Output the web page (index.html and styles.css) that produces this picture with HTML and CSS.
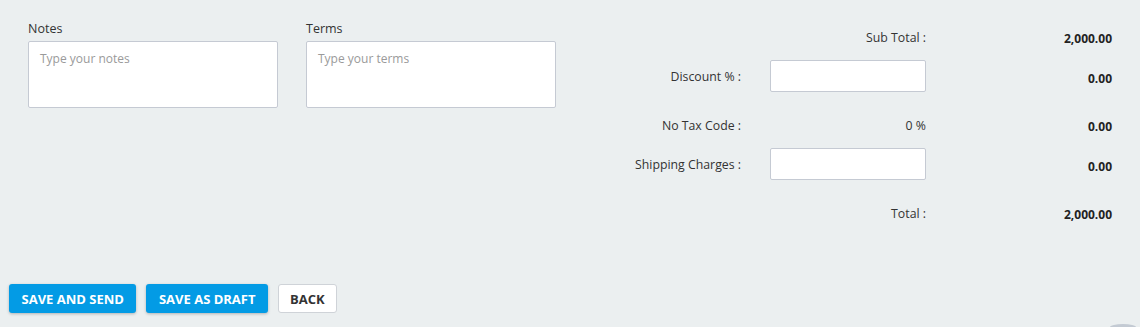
FILE: index.html
```html
<!DOCTYPE html>
<html lang="en">

<head>
  <meta charset="UTF-8">
  <meta name="viewport" content="width=device-width, initial-scale=1.0">
  <title>Invoice footer</title>
  <link rel="stylesheet" href="styles.css">
</head>

<body>
  <div class="page">
    <div class="summary">
      <div class="remarks">
        <div class="field">
          <label for="notes">Notes</label>
          <textarea id="notes" placeholder="Type your notes"></textarea>
        </div>
        <div class="field">
          <label for="terms">Terms</label>
          <textarea id="terms" placeholder="Type your terms"></textarea>
        </div>
      </div>
      <div class="totals">
        <div class="row row-text">
          <span class="label wide">Sub Total :</span>
          <span class="amount">2,000.00</span>
        </div>
        <div class="row row-input">
          <span class="label">Discount % :</span>
          <input class="box" type="text">
          <span class="amount">0.00</span>
        </div>
        <div class="row row-text">
          <span class="label">No Tax Code :</span>
          <span class="rate">0 %</span>
          <span class="amount">0.00</span>
        </div>
        <div class="row row-input">
          <span class="label">Shipping Charges :</span>
          <input class="box" type="text">
          <span class="amount">0.00</span>
        </div>
        <div class="row row-text">
          <span class="label wide">Total :</span>
          <span class="amount">2,000.00</span>
        </div>
      </div>
    </div>
    <div class="actions">
      <button class="btn primary">SAVE AND SEND</button>
      <button class="btn primary">SAVE AS DRAFT</button>
      <button class="btn plain">BACK</button>
    </div>
  </div>
  <i class="fab"></i>
</body>

</html>
```

FILE: styles.css
```css
html,
body {
  margin: 0;
  height: 100%;
  overflow: hidden;
}

body {
  background: #ebeff0;
  font-family: "Open Sans", "Liberation Sans", sans-serif;
  color: #333;
  position: relative;
}

.page {
  padding: 20px 0 0 9px;
}

.summary {
  display: flex;
}

.remarks {
  display: flex;
  flex: none;
  gap: 28px;
  box-sizing: border-box;
  padding-left: 19px;
  width: 580px;
}

.field {
  display: flex;
  flex-direction: column;
}

.field label {
  font-size: 12.5px;
  line-height: 17px;
  margin-bottom: 4px;
  color: #333;
}

.field textarea {
  width: 250px;
  height: 67px;
  box-sizing: border-box;
  border: 1px solid #c5cad3;
  border-radius: 2px;
  background: #fff;
  resize: none;
  outline: none;
  padding: 8px 11px;
  font-family: inherit;
  font-size: 12px;
}

.field textarea::placeholder {
  color: #9a9a9a;
}

.totals {
  display: flex;
  flex-direction: column;
  margin-top: 1px;
}

.row {
  display: grid;
  grid-template-columns: 152px 156px 157px;
  column-gap: 29px;
  align-items: center;
  height: 32px;
  font-size: 12.3px;
}

.row-input {
  margin-bottom: 17px;
}

.row-text {
  margin-bottom: 7px;
}

.row:last-child {
  margin-bottom: 0;
}

.label {
  text-align: right;
  color: #333;
}

.label.wide {
  grid-column: 1 / 3;
}

.rate {
  text-align: right;
  color: #333;
}

.box {
  width: 156px;
  height: 32px;
  box-sizing: border-box;
  border: 1px solid #c5cad3;
  border-radius: 2px;
  background: #fff;
  outline: none;
}

.amount {
  text-align: right;
  font-weight: bold;
  font-size: 12px;
  color: #222;
  padding-top: 5px;
}

.row-text .amount {
  padding-top: 2px;
}

.actions {
  display: flex;
  gap: 10px;
  margin-top: 55px;
}

.btn {
  height: 29px;
  padding: 0 12.5px;
  border-radius: 3px;
  font-family: inherit;
  font-size: 13px;
  font-weight: bold;
  cursor: pointer;
}

.btn.primary {
  background: #039be5;
  color: #fff;
  border: none;
  box-shadow: 0 1px 3px rgba(0, 0, 0, 0.25);
}

.btn.plain {
  background: #fff;
  color: #333;
  border: 1px solid #cfd3d8;
  padding: 0 11px;
}

.fab {
  position: absolute;
  left: 1110px;
  bottom: 0;
  width: 26px;
  height: 3px;
  border-radius: 13px 13px 0 0 / 3px 3px 0 0;
  background: #c3cad3;
}
```
